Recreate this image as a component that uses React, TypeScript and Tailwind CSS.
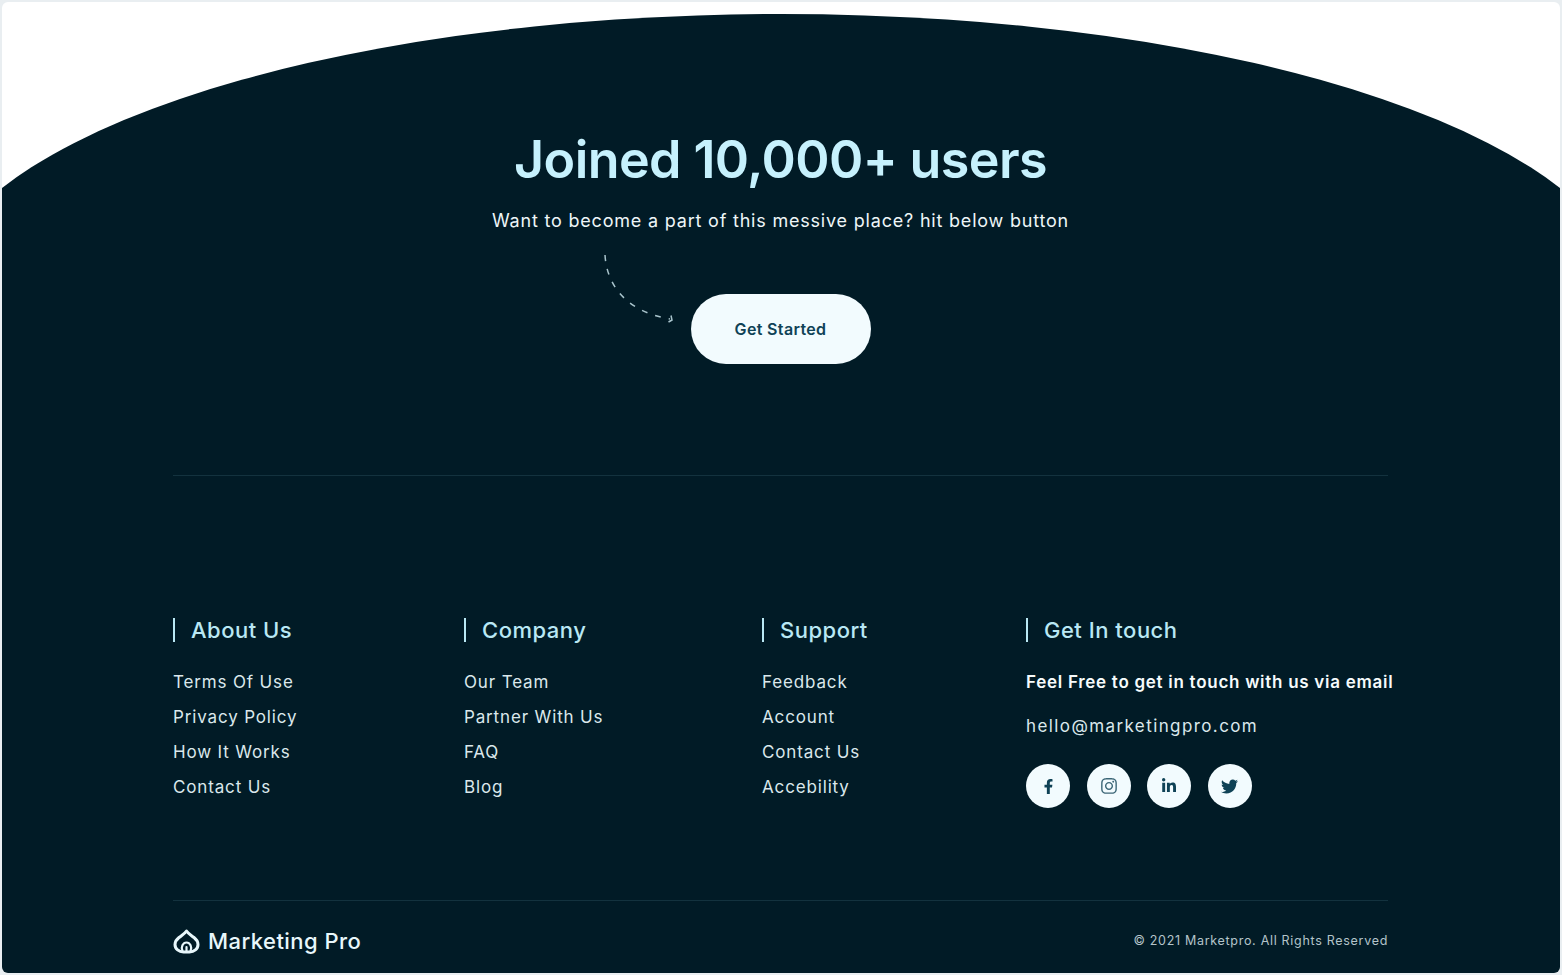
import React from "react";
import { FaFacebookF, FaInstagram, FaLinkedinIn, FaTwitter } from "react-icons/fa";

const COLUMNS = [
  { title: "About Us", links: ["Terms Of Use", "Privacy Policy", "How It Works", "Contact Us"] },
  { title: "Company", links: ["Our Team", "Partner With Us", "FAQ", "Blog"] },
  { title: "Support", links: ["Feedback", "Account", "Contact Us", "Accebility"] },
];

const SOCIALS = [
  { name: "facebook", icon: <FaFacebookF size={15} /> },
  { name: "instagram", icon: <FaInstagram size={18} className="opacity-80" /> },
  { name: "linkedin", icon: <FaLinkedinIn size={16} /> },
  { name: "twitter", icon: <FaTwitter size={17} /> },
];

function ColumnTitle({ title }: { title: string }) {
  return (
    <h3 className="h-6 border-l-2 border-[#b9e8f4] pl-[16px] text-[22px] leading-6 font-medium tracking-[0.5px] text-[#b9e8f4]">
      {title}
    </h3>
  );
}

function Logo() {
  return (
    <svg width="27" height="26" viewBox="0 0 27 26" fill="none" stroke="#e8f7fb" strokeWidth="3" strokeLinejoin="round" strokeLinecap="round">
      <path d="M13.5 3 C15.5 6 18.5 7.5 21 9.5 C23.5 11.5 25 13.5 25 16.5 C25 21 21 24 16.5 24 L10.5 24 C6 24 2 21 2 16.5 C2 13.5 3.5 11.5 6 9.5 C8.5 7.5 11.5 6 13.5 3 Z" />
      <path d="M9.5 23 C7.5 19 10 14.5 13.5 14.5 C17 14.5 19.5 19 17.5 23" strokeWidth="2.2" />
      <path d="M13.5 19 L13.5 23" strokeWidth="2.2" />
    </svg>
  );
}

export default function App() {
  return (
    <div className="h-[975px] w-full bg-[#e9eef1] px-[2px] pt-[2px] pb-[2px] font-['Inter','Liberation_Sans',sans-serif]">
      <div className="h-full overflow-hidden rounded-[6px] bg-white pt-[12px]">
        {/* arch is wider than the frame so its edges get cut off at an angle */}
        <div className="ml-[-71.5px] h-[959px] w-[1700px] rounded-t-[850px_290px] bg-[#011b26]">
          <div className="mx-auto w-[1215px]">
            <section className="flex flex-col items-center pt-[118px]">
              <h1 className="text-[52px] leading-[56px] font-semibold tracking-[-0.6px] text-[#c6f1fd]">
                Joined 10,000+ users
              </h1>
              <p className="mt-[21px] text-[18px] leading-6 tracking-[0.8px] text-[#eef6f8]">
                Want to become a part of this messive place? hit below button
              </p>
              <div className="relative mt-[61px]">
                <svg className="absolute top-[-40px] left-[-87px]" width="72" height="70" viewBox="0 0 72 70" fill="none" stroke="#a9c4cc" strokeWidth="1.5">
                  <path d="M1 1 C3 34 25 58 66 65" strokeDasharray="6 8" />
                  <path d="M67 61.5 L68 66 L64.5 68" />
                </svg>
                <button type="button" className="h-[70px] w-[180px] rounded-[35px] bg-[#f2fbfe] text-[16px] font-semibold tracking-[0.35px] text-[#0f4256]">
                  Get Started
                </button>
              </div>
            </section>

            <div className="mt-[111px] h-px bg-[#13323e]" />

            <section className="mt-[142px] grid grid-cols-[291px_298px_264px_1fr]">
              {COLUMNS.map((col) => (
                <div key={col.title}>
                  <ColumnTitle title={col.title} />
                  <ul className="mt-[23px]">
                    {col.links.map((link) => (
                      <li key={link} className="text-[17px] leading-[35px] tracking-[0.85px] text-[#dbe8ec]">
                        {link}
                      </li>
                    ))}
                  </ul>
                </div>
              ))}
              <div>
                <ColumnTitle title="Get In touch" />
                <p className="mt-[23px] text-[17px] leading-[35px] font-semibold tracking-[0.72px] whitespace-nowrap text-[#f6fbfc]">
                  Feel Free to get in touch with us via email
                </p>
                <p className="mt-[9px] text-[17px] leading-[35px] tracking-[1.4px] text-[#dbe8ec]">hello@marketingpro.com</p>
                <div className="mt-[20px] flex gap-[16.6px]">
                  {SOCIALS.map((s) => (
                    <a key={s.name} href="#" aria-label={s.name} className="flex h-[44px] w-[44px] items-center justify-center rounded-full bg-[#f2fbfe] text-[#0f4256]">
                      {s.icon}
                    </a>
                  ))}
                </div>
              </div>
            </section>

            <div className="mt-[92px] h-px bg-[#13323e]" />

            <footer className="mt-[27px] flex items-center justify-between">
              <div className="flex items-center gap-[8px]">
                <Logo />
                <span className="text-[22px] leading-[26px] font-medium tracking-[0.45px] text-[#e8f7fb]">Marketing Pro</span>
              </div>
              <p className="text-[12.5px] tracking-[0.7px] text-[#b4c4ca]">© 2021 Marketpro. All Rights Reserved</p>
            </footer>
          </div>
        </div>
      </div>
    </div>
  );
}
